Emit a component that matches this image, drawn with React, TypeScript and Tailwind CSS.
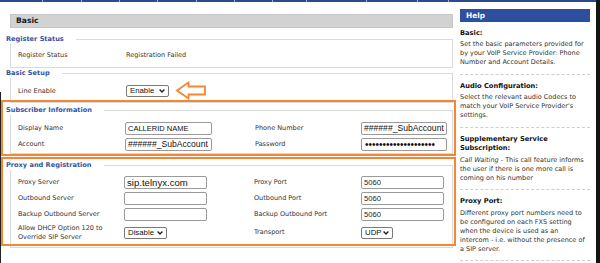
import React from "react";

const Chevron = () => (
  <svg width="6" height="4" viewBox="0 0 6 4" className="shrink-0">
    <polyline points="0.6,0.6 3,3 5.4,0.6" fill="none" stroke="#222" strokeWidth="1.4" />
  </svg>
);

function Section({ title, boxClass, children }: { title: string; boxClass: string; children: React.ReactNode }) {
  return (
    <div>
      <div className="flex h-[10px] items-center pl-[6px] pr-[3px]">
        <span className="whitespace-nowrap font-bold text-[#3453a4] text-[6.6px]">{title}</span>
        <div className="ml-[12px] h-[5px] flex-1 self-end border-t border-r border-[#dadada]" />
      </div>
      <div className={boxClass}>{children}</div>
    </div>
  );
}

function Input({ children, cls }: { children?: React.ReactNode; cls: string }) {
  return (
    <div className={"flex h-[13px] items-center overflow-hidden whitespace-nowrap rounded-[2px] border border-[#9a9a9a] bg-white px-[2px] font-['Liberation_Sans',sans-serif] text-[#111] " + cls}>
      {children}
    </div>
  );
}

function Select({ label, cls }: { label: string; cls: string }) {
  return (
    <div className={"flex h-[12px] items-center justify-between rounded-[2px] border border-[#7a7a7a] bg-white pl-[3px] pr-[3px] font-['Liberation_Sans',sans-serif] text-[7.8px] text-[#111] " + cls}>
      <span>{label}</span>
      <Chevron />
    </div>
  );
}

const tabs = [43, 39, 38, 38, 39, 38, 38, 34, 60, 51, 31];

function HelpBlock({ title, children, first }: { title: React.ReactNode; children: React.ReactNode; first?: boolean }) {
  return (
    <div>
      <div className={"font-bold text-[6.7px] leading-[9.4px] text-[#111] " + (first ? "mt-[7px]" : "mt-[7px]")}>{title}</div>
      <div className="mt-[2px] whitespace-nowrap text-[6.5px] leading-[9px] text-[#333]">{children}</div>
      <div className="mt-[6.5px] border-t border-dashed border-[#cfcfcf]" />
    </div>
  );
}

export default function App() {
  return (
    <div className="relative flex h-[263px] w-[600px] overflow-hidden bg-white font-['DejaVu_Sans',sans-serif] text-[6.5px] leading-none text-[#333]">
      <div className="flex w-[596px] flex-col">
        {/* top tab strip */}
        <div className="flex h-[2px] bg-[#2b4a8e]">
          {tabs.map((w, i) => (
            <div key={i} style={{ width: w }} className="h-full border-r border-[#a3b3d8]" />
          ))}
        </div>

        <div className="flex">
          {/* main column */}
          <div className="w-[456px]">
            <div className="ml-[10px] mt-[12px] flex h-[14px] w-[443px] items-center border border-[#c6c6c6] bg-[#d2d2d2] pl-[5px] text-[7.6px] font-bold text-[#1a1a1a]">
              Basic
            </div>

            <div className="mt-[6px]">
              <Section title="Register Status" boxClass="ml-[10px] mr-[3px] border-x border-b border-[#dadada] pl-[7px] pt-[6px] pb-[7px]">
                <div className="grid h-[10px] grid-cols-[108px_1fr] items-center">
                  <span>Register Status</span>
                  <span>Registration Failed</span>
                </div>
              </Section>
            </div>

            <Section title="Basic Setup" boxClass="ml-[10px] mr-[3px] border-x border-b border-[#dadada] pl-[7px] pt-[7px] pb-[5px]">
              <div className="grid h-[12px] grid-cols-[108px_1fr] items-center">
                <span>Line Enable</span>
                <Select label="Enable" cls="w-[43px]" />
              </div>
            </Section>

            <div className="mt-[2px]">
              <Section title="Subscriber Information" boxClass="ml-[10px] mr-[3px] border-x border-b border-[#dadada] pl-[7px] pt-[7px] pb-[2px]">
                <div className="flex flex-col gap-[3px]">
                  <div className="grid h-[13px] grid-cols-[107px_130px_106px_1fr] items-center">
                    <span>Display Name</span>
                    <Input cls="w-[87px] text-[7.5px]">CALLERID NAME</Input>
                    <span>Phone Number</span>
                    <Input cls="w-[86px] text-[8.6px]">######_SubAccount</Input>
                  </div>
                  <div className="grid h-[13px] grid-cols-[107px_130px_106px_1fr] items-center">
                    <span>Account</span>
                    <Input cls="w-[87px] text-[8.6px]">######_SubAccount</Input>
                    <span>Password</span>
                    <Input cls="w-[86px] text-[10px] pl-[3px] leading-none">••••••••••••••••••••</Input>
                  </div>
                </div>
              </Section>
            </div>

            <div className="mt-[6px]">
              <Section title="Proxy and Registration" boxClass="ml-[10px] mr-[3px] border-x border-b border-[#dadada] pl-[7px] pt-[6px] pb-[6px]">
                <div className="flex flex-col gap-[3px]">
                  <div className="grid h-[13px] grid-cols-[106px_130px_107px_1fr] items-center">
                    <span>Proxy Server</span>
                    <Input cls="w-[83px] text-[9.6px]">sip.telnyx.com</Input>
                    <span>Proxy Port</span>
                    <Input cls="w-[83px] text-[7.6px] font-['DejaVu_Sans',sans-serif] text-[#222]">5060</Input>
                  </div>
                  <div className="grid h-[13px] grid-cols-[106px_130px_107px_1fr] items-center">
                    <span>Outbound Server</span>
                    <Input cls="w-[83px] text-[9px]" />
                    <span>Outbound Port</span>
                    <Input cls="w-[83px] text-[7.6px] font-['DejaVu_Sans',sans-serif] text-[#222]">5060</Input>
                  </div>
                  <div className="grid h-[13px] grid-cols-[106px_130px_107px_1fr] items-center">
                    <span>Backup Outbound Server</span>
                    <Input cls="w-[83px] text-[9px]" />
                    <span>Backup Outbound Port</span>
                    <Input cls="w-[83px] text-[7.6px] font-['DejaVu_Sans',sans-serif] text-[#222]">5060</Input>
                  </div>
                  <div className="grid h-[17px] grid-cols-[106px_130px_107px_1fr] items-center">
                    <span className="leading-[8.4px]">
                      Allow DHCP Option 120 to
                      <br />
                      Override SIP Server
                    </span>
                    <Select label="Disable" cls="w-[43px]" />
                    <span>Transport</span>
                    <Select label="UDP" cls="w-[32px]" />
                  </div>
                </div>
              </Section>
            </div>
          </div>

          {/* help column */}
          <div className="ml-[4px] w-[130px]">
            <div className="mt-[7px] flex h-[13px] items-center bg-[#2c4f9f] pl-[6px] text-[7.4px] font-bold text-white">
              Help
            </div>
            <HelpBlock title="Basic:" first>
              Set the basic parameters provided for
              <br />
              by your VoIP Service Provider: Phone
              <br />
              Number and Account Details.
            </HelpBlock>
            <HelpBlock title="Audio Configuration:">
              Select the relevant audio Codecs to
              <br />
              match your VoIP Service Provider's
              <br />
              settings.
            </HelpBlock>
            <HelpBlock
              title={
                <>
                  Supplementary Service
                  <br />
                  Subscription:
                </>
              }
            >
              <i>Call Waiting</i> - This call feature informs
              <br />
              the user if there is one more call is
              <br />
              coming on his number
            </HelpBlock>
            <HelpBlock title="Proxy Port:">
              Different proxy port numbers need to
              <br />
              be configured on each FXS setting
              <br />
              when the device is used as an
              <br />
              intercom - i.e. without the presence of
              <br />
              a SIP server.
            </HelpBlock>
          </div>
        </div>
      </div>
      <div className="w-[4px] bg-[#151515]" />

      {/* annotation overlays */}
      <div className="absolute left-0 top-[92px] bottom-0 w-px bg-[#222]" />
      <div className="absolute left-[1px] top-[100px] h-[56px] w-[455px] border-2 border-[#f58634]" />
      <div className="absolute left-[1px] top-[157px] h-[89px] w-[455px] border-2 border-[#f58634]" />
      <svg className="absolute left-[175px] top-[81px]" width="32" height="19" viewBox="0 0 32 19">
        <polygon points="2,9.5 13.5,1.5 13.5,5.5 30,5.5 30,13.5 13.5,13.5 13.5,17.5" fill="none" stroke="#f58634" strokeWidth="1.8" strokeLinejoin="miter" />
      </svg>
    </div>
  );
}
